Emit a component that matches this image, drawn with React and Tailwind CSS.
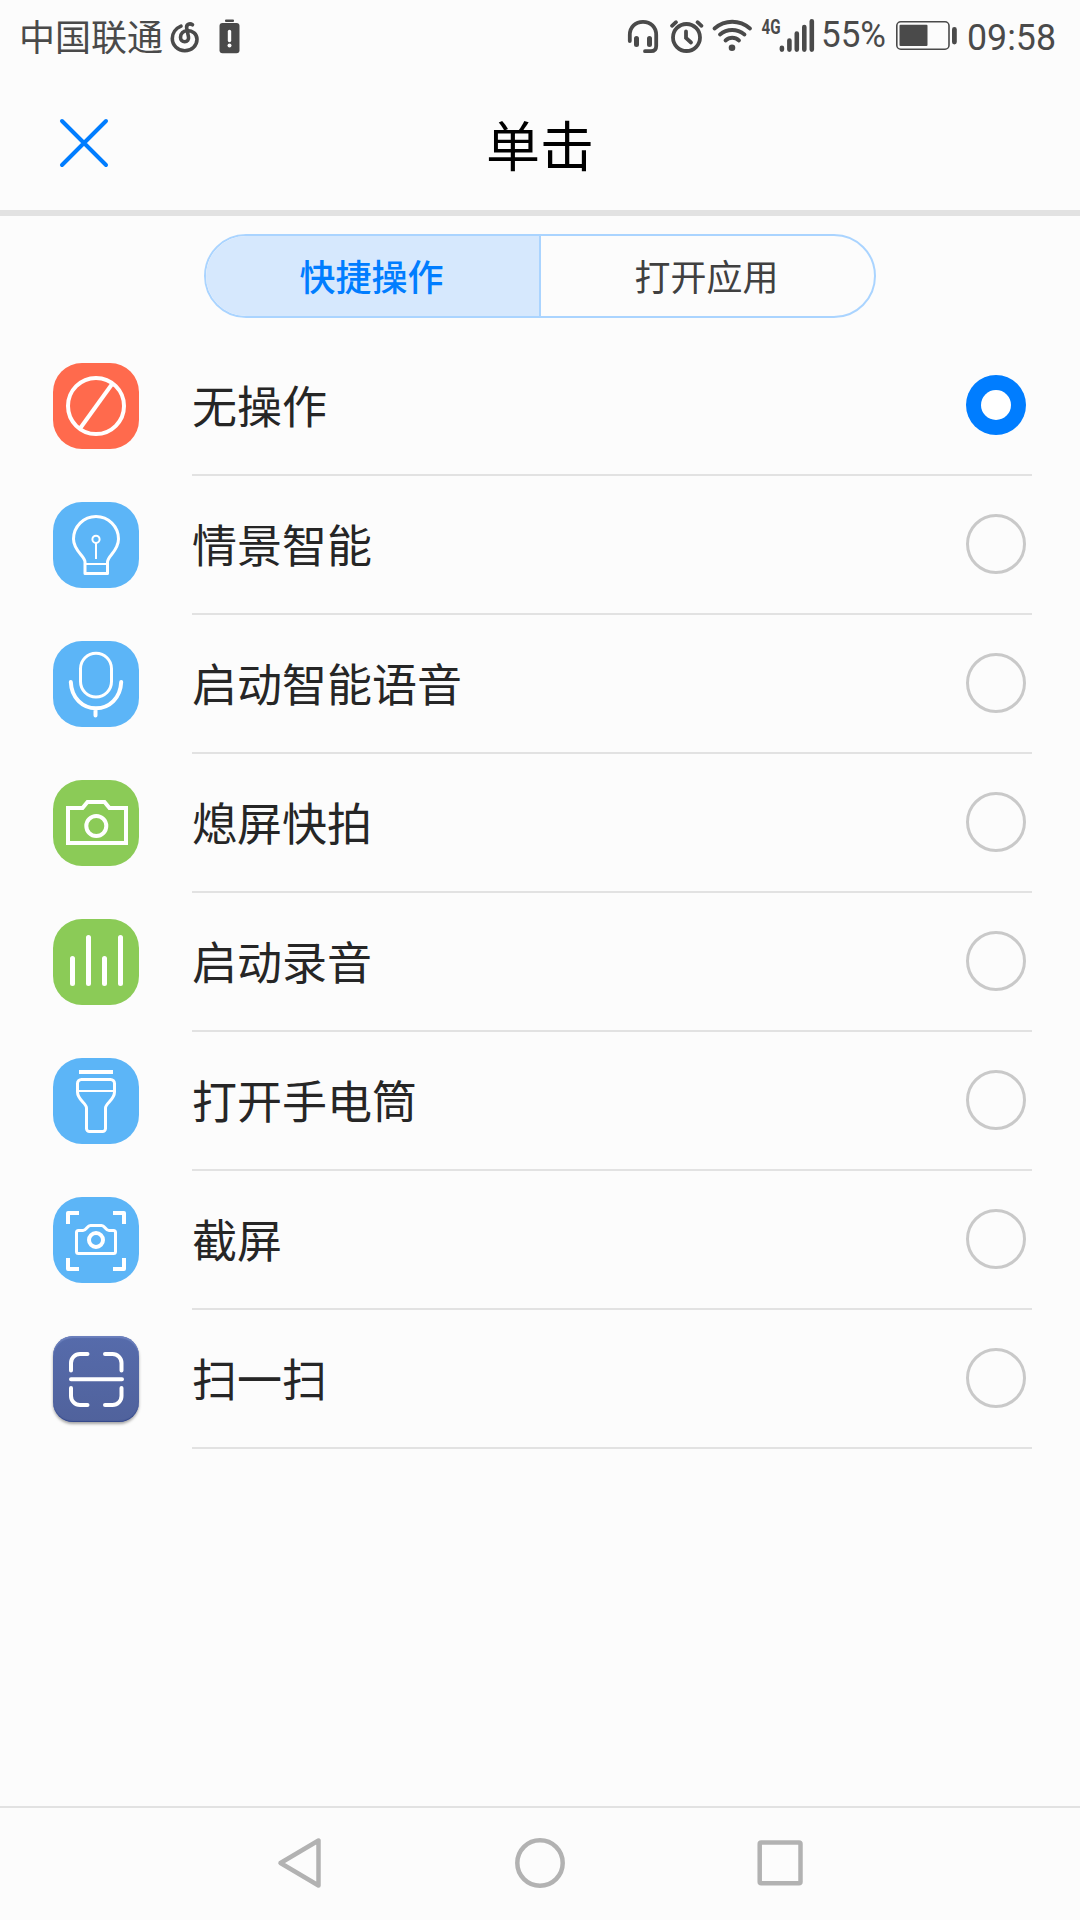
import React, { useState } from "react";

const INK = "#4a4a4a";

function NoActionIcon() {
  return (
    <svg viewBox="0 0 86 86" className="w-full h-full" fill="none" stroke="#fff" strokeWidth="4">
      <circle cx="43" cy="43" r="28" />
      <path d="M59.5 20.5L27 65.5" />
    </svg>
  );
}

function BulbIcon() {
  return (
    <svg viewBox="0 0 86 86" className="w-full h-full" fill="none" stroke="#fff" strokeWidth="3" strokeLinejoin="round">
      <path d="M32 71.5V60C32 54 20.5 49 20.5 37A22.5 22.5 0 0 1 65.5 37C65.5 49 54.5 54 54.5 60V71.5Z" />
      <path d="M32 62H54M43 41V57" strokeWidth="2" />
      <circle cx="43" cy="37.3" r="3.6" strokeWidth="2" />
    </svg>
  );
}

function MicIcon() {
  return (
    <svg viewBox="0 0 86 86" className="w-full h-full" fill="none" stroke="#fff" strokeWidth="3" strokeLinecap="round">
      <rect x="27.5" y="12.2" width="31" height="43.8" rx="15.5" />
      <path d="M17.8 41C18.5 57 29.5 67.3 43 67.3S67.5 57 68.2 41M42.5 68V74.5" strokeWidth="4" />
    </svg>
  );
}

function CameraIcon() {
  return (
    <svg viewBox="0 0 86 86" className="w-full h-full" fill="none" stroke="#fff" strokeWidth="4">
      <path d="M15 28H29.5L34.5 22H51.5L56.5 28H73V63H15Z" />
      <circle cx="43.3" cy="46" r="10" />
    </svg>
  );
}

function RecordIcon() {
  return (
    <svg viewBox="0 0 86 86" className="w-full h-full" fill="none" stroke="#fff" strokeWidth="5" strokeLinecap="round">
      <path d="M19.5 39.5V64.5M35.5 18.5V64.5M51.5 39.5V64.5M67.5 18.5V64.5" />
    </svg>
  );
}

function TorchIcon() {
  return (
    <svg viewBox="0 0 86 86" className="w-full h-full" fill="none" stroke="#fff" strokeWidth="3">
      <path d="M26 14H60" strokeWidth="4" />
      <path d="M28.5 21.5H57.5a4 4 0 0 1 4 4V34C61.5 42 52.5 45 52.5 50V70.5a3 3 0 0 1-3 3H36.5a3 3 0 0 1-3-3V50C33.5 45 24.5 42 24.5 34V25.5a4 4 0 0 1 4-4Z" />
      <path d="M25 33H61" strokeWidth="2" />
    </svg>
  );
}

function ScreenshotIcon() {
  return (
    <svg viewBox="0 0 86 86" className="w-full h-full" fill="none" stroke="#fff" strokeWidth="4" strokeLinejoin="round">
      <path d="M15 27V16H26M60 16H71V27M71 61V72H60M26 72H15V61" />
      <path d="M25.5 33.5H30C33.5 33.5 34 28.5 37.5 28.5H48.5C52 28.5 52.5 33.5 56 33.5H60.5a2 2 0 0 1 2 2V54.5a2 2 0 0 1-2 2H25.5a2 2 0 0 1-2-2V35.5a2 2 0 0 1 2-2Z" strokeWidth="3" />
      <circle cx="43" cy="43" r="7" />
    </svg>
  );
}

function ScanIcon() {
  return (
    <svg viewBox="0 0 86 86" className="w-full h-full" fill="none" stroke="#fff" strokeWidth="4" strokeLinecap="round">
      <path d="M18 34.5V27a9 9 0 0 1 9-9H34.5M52 18H59.5a9 9 0 0 1 9 9V34.5M68.5 52V60a9 9 0 0 1-9 9H52M34.5 69H27a9 9 0 0 1-9-9V52M18 43.3H69" />
    </svg>
  );
}

const actions = [
  { label: "无操作", Icon: NoActionIcon, tile: "rounded-[29px] bg-[#ff6a4d]" },
  { label: "情景智能", Icon: BulbIcon, tile: "rounded-[29px] bg-[#5cb5f7]" },
  { label: "启动智能语音", Icon: MicIcon, tile: "rounded-[29px] bg-[#5cb5f7]" },
  { label: "熄屏快拍", Icon: CameraIcon, tile: "rounded-[29px] bg-[#8bcb57]" },
  { label: "启动录音", Icon: RecordIcon, tile: "rounded-[29px] bg-[#8bcb57]" },
  { label: "打开手电筒", Icon: TorchIcon, tile: "rounded-[29px] bg-[#5cb5f7]" },
  { label: "截屏", Icon: ScreenshotIcon, tile: "rounded-[29px] bg-[#5cb5f7]" },
  {
    label: "扫一扫",
    Icon: ScanIcon,
    tile: "rounded-[20px] bg-linear-to-b from-[#566bab] to-[#50629c] shadow-[0_2px_3px_rgba(0,0,0,0.35),inset_0_2px_1px_#6c80bd,inset_0_-1px_1px_#34488a]",
  },
];

function StatusBar() {
  return (
    <div className="h-[72px] flex items-start text-[#4a4a4a]">
      <span className="ml-[19px] mt-[9px] text-[36px] leading-[52px]">中国联通</span>
      {/* music app */}
      <svg className="ml-[5px] mt-[18px] w-[32px] h-[38px]" viewBox="168 18 32 38" fill="none" stroke={INK} strokeWidth="3.6" strokeLinecap="round">
        <path d="M181 26.2C175.5 28.5 172.3 33.5 172.3 38.5C172.3 45.5 178 50.8 184.8 50.8C191.5 50.8 197 45.8 197 39.2C197 34 192.5 30.5 187.3 30.5C183.5 30.5 180.5 33.8 180.5 37.3C180.5 40 182.3 41.8 184.7 41.8C187.3 41.8 189 39.6 188.5 37L186.7 28.2C186 24.8 189.5 22.6 192.5 24.8" />
      </svg>
      {/* battery warning */}
      <svg className="ml-[17px] mt-[18px] w-[24px] h-[38px]" viewBox="217 18 24 38">
        <rect x="225" y="19.5" width="9" height="2.4" rx="1" fill={INK} />
        <rect x="219.5" y="23" width="20" height="30.3" rx="3" fill={INK} />
        <path d="M229.5 31.5V40.5" stroke="#fff" strokeWidth="3.4" strokeLinecap="round" />
        <circle cx="229.5" cy="45.5" r="2" fill="#fff" />
      </svg>
      {/* headset, alarm, wifi, mobile signal */}
      <svg className="ml-[385px] mt-[8px] w-[192px] h-[52px]" viewBox="626 8 192 52" fill="none" stroke={INK} strokeWidth="3.8" strokeLinecap="round">
        <path d="M629.8 41V35C629.8 27 635.5 21.9 643 21.9S656.2 27 656.2 35V46C656.2 49.5 654 51.2 651 51.2H645" />
        <path d="M636.5 38.5V44.5M649.5 38.5V44.5" strokeWidth="5" />
        <circle cx="686.5" cy="37.5" r="13.5" />
        <path d="M686 31.5V38L691 42.5M672 25.8L676 22.2M697.5 22.2L701.5 25.8" />
        <path d="M714.5 28.5C725 19.5 739.5 19.5 750 28.5M720 34.5C727 28.5 737 28.5 744.5 34.5M725.5 40.5C729.5 36.8 735 36.8 739 40.5" />
        <circle cx="732" cy="47.8" r="3.3" fill={INK} stroke="none" />
        <text x="761.5" y="34" textLength="19" lengthAdjust="spacingAndGlyphs" fill={INK} stroke="none" fontFamily="Roboto, sans-serif" fontSize="21" fontWeight="700">4G</text>
        <path d="M781.9 49.6V47.8M789.4 49.6V40.5M796.8 49.6V33.5M804.3 49.6V27M811.8 49.6V21.2" strokeWidth="4.6" />
      </svg>
      <svg className="ml-[2px] mt-[8px] w-[70px] h-[52px]" viewBox="820 8 70 52">
        <text x="821" y="47" textLength="65" lengthAdjust="spacingAndGlyphs" fill={INK} fontFamily="Roboto, sans-serif" fontSize="36">55%</text>
      </svg>
      <svg className="ml-[4px] mt-[16px] w-[66px] h-[40px]" viewBox="894 16 66 40">
        <rect x="896.8" y="21.8" width="52.2" height="27.4" rx="4" fill="none" stroke={INK} strokeWidth="1.6" />
        <rect x="899.5" y="24.8" width="28" height="21.2" rx="1" fill={INK} />
        <rect x="952" y="27" width="4.8" height="17.5" rx="2.4" fill={INK} />
      </svg>
      <svg className="ml-[4px] mt-[8px] w-[96px] h-[52px]" viewBox="964 8 96 52">
        <text x="967" y="50.2" textLength="89" lengthAdjust="spacingAndGlyphs" fill={INK} fontFamily="Roboto, sans-serif" fontSize="37">09:58</text>
      </svg>
    </div>
  );
}

function Radio({ checked }) {
  if (checked) {
    return (
      <span className="w-[60px] h-[60px] rounded-full bg-[#007dff] flex items-center justify-center">
        <span className="w-[30px] h-[30px] rounded-full bg-white" />
      </span>
    );
  }
  return <span className="w-[60px] h-[60px] rounded-full border-[3px] border-[#c9c9c9]" />;
}

function App() {
  const [tab, setTab] = useState(0);
  const [selected, setSelected] = useState(0);

  return (
    <div className="w-[1080px] h-[1920px] bg-[#fcfcfc] flex flex-col overflow-hidden font-['Noto_Sans_CJK_SC',sans-serif]">
      <StatusBar />

      <header className="h-[144px] border-b-[6px] border-[#e2e2e2] grid grid-cols-[1fr_auto_1fr] items-start">
        <button className="ml-[58px] mt-[45px] w-[52px] h-[52px]">
          <svg viewBox="0 0 52 52" className="w-full h-full" fill="none" stroke="#007dff" strokeWidth="4" strokeLinecap="round">
            <path d="M4 4L48 48M48 4L4 48" />
          </svg>
        </button>
        <h1 className="mt-[32px] text-[54px] leading-[80px] text-black">单击</h1>
      </header>

      <div className="mt-[18px] mx-auto w-[672px] h-[84px] rounded-full border-2 border-[#aad4ff] grid grid-cols-[335px_333px] overflow-hidden text-[36px]">
        {["快捷操作", "打开应用"].map((name, i) => (
          <button
            key={name}
            onClick={() => setTab(i)}
            className={`pb-[2px] pr-[2px] first:border-r-2 border-[#aad4ff] ${tab === i ? "bg-[#d6e8fd] text-[#007dff] font-medium" : "text-[#404040]"}`}
          >
            {name}
          </button>
        ))}
      </div>

      <ul className="mt-[19px] pl-[53px] pr-[48px]">
        {actions.map(({ label, Icon, tile }, i) => (
          <li key={label} onClick={() => setSelected(i)} className="h-[139px] flex">
            <div className={`mt-[26px] mr-[53px] w-[86px] h-[86px] shrink-0 ${tile}`}>
              <Icon />
            </div>
            <div className="flex-1 flex items-center justify-between pr-[6px] pb-[2px] border-b-2 border-[#e2e2e2] text-[45px] text-[#262626]">
              <span>{label}</span>
              <Radio checked={selected === i} />
            </div>
          </li>
        ))}
      </ul>

      <nav className="mt-auto h-[114px] border-t-2 border-[#e2e2e2] pb-[2px] flex items-center justify-center gap-[180px]">
        <svg className="w-[60px] h-[60px]" viewBox="270 1833 60 60" fill="none" stroke="#b2b2b2" strokeWidth="4.5" strokeLinejoin="round">
          <path d="M318.5 1840.5V1885.5L280.5 1863Z" />
        </svg>
        <svg className="w-[60px] h-[60px]" viewBox="510 1833 60 60" fill="none" stroke="#b2b2b2" strokeWidth="4.5">
          <circle cx="540" cy="1863" r="22.7" />
        </svg>
        <svg className="w-[60px] h-[60px]" viewBox="750 1833 60 60" fill="none" stroke="#b2b2b2" strokeWidth="4.5">
          <rect x="759.7" y="1842.5" width="40.8" height="40.8" rx="1.5" />
        </svg>
      </nav>
    </div>
  );
}

export default App;
